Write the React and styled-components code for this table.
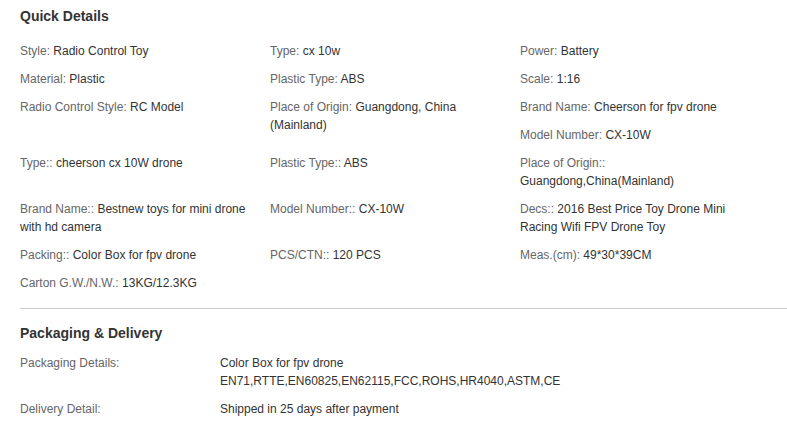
import React from "react";
import styled, { createGlobalStyle } from "styled-components";

const Global = createGlobalStyle`
  html, body { margin: 0; padding: 0; background: #fff; }
  body { font-family: "Liberation Sans", Arial, sans-serif; font-size: 12px; color: #333; }
`;

const Page = styled.div`
  width: 787px;
  padding-top: 7px;
`;

const Section = styled.section`
  padding-left: 20px;
`;

const Title = styled.h3`
  margin: 0;
  font-size: 14px;
  line-height: 18px;
  font-weight: bold;
  color: #333;
`;

const QuickList = styled.ul`
  display: flow-root;
  list-style: none;
  margin: 17px 0 0;
  padding: 0;
`;

const QuickItem = styled.li`
  float: left;
  width: 250px;
  box-sizing: border-box;
  padding-right: 10px;
  margin-bottom: 10px;
  line-height: 18px;
  font-size: 12px;
`;

const Label = styled.span`
  color: #666;
`;

const Value = styled.span`
  color: #333;
`;

const Divider = styled.hr`
  border: 0;
  border-top: 1px solid #ccc;
  margin: 6px 0 15px;
  height: 0;
`;

const PackRow = styled.div`
  display: flex;
  line-height: 18px;
  margin-bottom: 10px;
`;

const PackLabel = styled.div`
  width: 200px;
  flex: none;
  color: #666;
`;

const PackValue = styled.div`
  color: #333;
`;

const PackList = styled.div`
  margin-top: 12px;
`;

const quick = [
  ["Style:", "Radio Control Toy"],
  ["Type:", "cx 10w"],
  ["Power:", "Battery"],
  ["Material:", "Plastic"],
  ["Plastic Type:", "ABS"],
  ["Scale:", "1:16"],
  ["Radio Control Style:", "RC Model"],
  ["Place of Origin:", "Guangdong, China (Mainland)"],
  ["Brand Name:", "Cheerson for fpv drone"],
  ["Model Number:", "CX-10W"],
  ["Type::", "cheerson cx 10W drone"],
  ["Plastic Type::", "ABS"],
  ["Place of Origin::", "Guangdong,China(Mainland)"],
  ["Brand Name::", "Bestnew toys for mini drone with hd camera"],
  ["Model Number::", "CX-10W"],
  ["Decs::", "2016 Best Price Toy Drone Mini Racing Wifi FPV Drone Toy"],
  ["Packing::", "Color Box for fpv drone"],
  ["PCS/CTN::", "120 PCS"],
  ["Meas.(cm):", "49*30*39CM"],
  ["Carton G.W./N.W.:", "13KG/12.3KG"],
];

export default function App() {
  return (
    <Page>
      <Global />
      <Section>
        <Title>Quick Details</Title>
        <QuickList>
          {quick.map(([l, v], i) => (
            <QuickItem key={i}>
              <Label>{l}</Label> <Value>{v}</Value>
            </QuickItem>
          ))}
        </QuickList>
        <Divider />
        <Title>Packaging &amp; Delivery</Title>
        <PackList>
          <PackRow>
            <PackLabel>Packaging Details:</PackLabel>
            <PackValue>
              Color Box for fpv drone
              <br />
              EN71,RTTE,EN60825,EN62115,FCC,ROHS,HR4040,ASTM,CE
            </PackValue>
          </PackRow>
          <PackRow>
            <PackLabel>Delivery Detail:</PackLabel>
            <PackValue>Shipped in 25 days after payment</PackValue>
          </PackRow>
        </PackList>
      </Section>
    </Page>
  );
}
